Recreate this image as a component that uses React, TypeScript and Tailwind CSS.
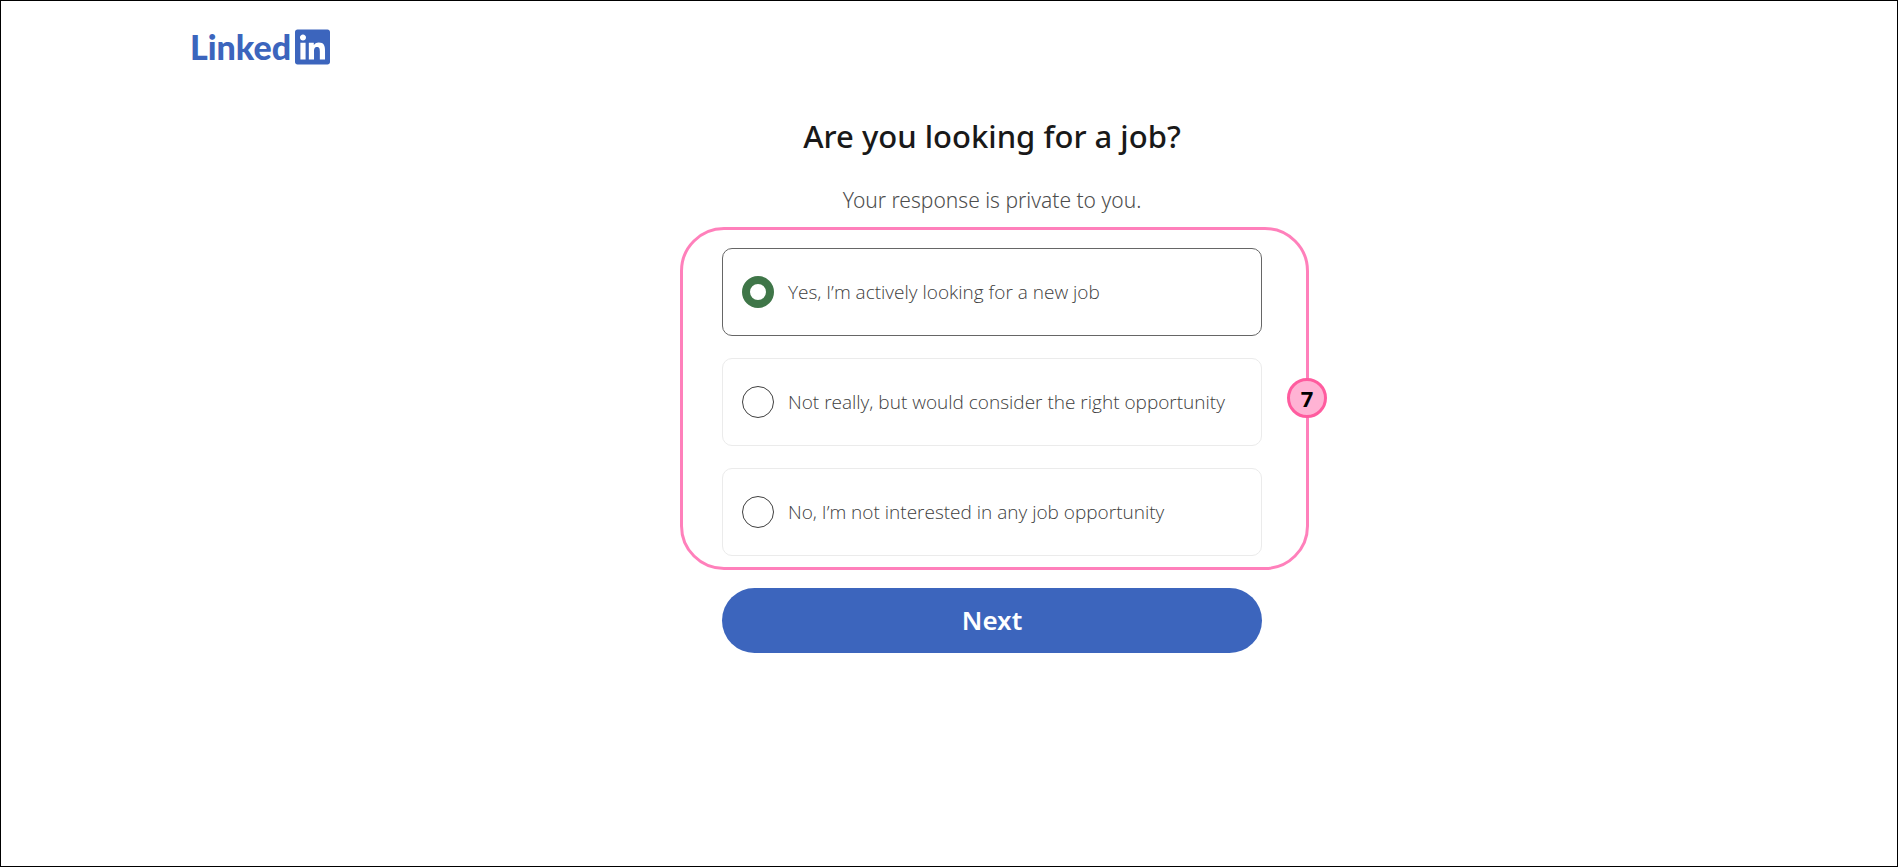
import { useState } from 'react'
import { FaLinkedin } from 'react-icons/fa'

const options = [
  { id: 'active', label: 'Yes, I’m actively looking for a new job' },
  { id: 'open', label: 'Not really, but would consider the right opportunity' },
  { id: 'none', label: 'No, I’m not interested in any job opportunity' },
]

function Logo() {
  return (
    <a href="#" aria-label="LinkedIn" className="inline-flex items-center gap-1 text-[#3c65bd]">
      <span className="font-['Lato',sans-serif] text-[34px] leading-10 font-black">Linked</span>
      <FaLinkedin className="h-10 w-[35px]" aria-hidden="true" />
    </a>
  )
}

export default function App() {
  const [selected, setSelected] = useState('active')

  return (
    <div className="min-h-screen border border-black bg-white font-['Noto_Sans','Open_Sans',sans-serif]">
      <header className="pt-[26px] pl-[189px]">
        <Logo />
      </header>

      <main className="flex flex-col items-center pt-[45px] pl-[86px]">
        <h1 id="job-question" className="text-[31px] leading-12 font-medium text-[#191919]">
          Are you looking for a job?
        </h1>
        <p className="mt-6 text-[21px] leading-8 font-light text-[#4d4d4d]">Your response is private to you.</p>

        <form className="flex w-full flex-col items-center" onSubmit={(e) => e.preventDefault()}>
          <fieldset
            aria-labelledby="job-question"
            className="relative mt-[11px] ml-[5px] w-full max-w-[629px] rounded-[44px] border-3 border-[#ff80bb] pt-[18px] pr-11 pb-[11px] pl-[39px]"
          >
            <div className="flex flex-col gap-[22px]">
              {options.map((option) => (
                <label
                  key={option.id}
                  htmlFor={option.id}
                  className="flex h-[88px] items-center gap-3.5 rounded-[10px] border border-[#ebebeb] px-[19px] font-['Open_Sans',sans-serif] text-[19px] font-light text-[#404040] has-checked:border-[#666666]"
                >
                  <input
                    id={option.id}
                    type="radio"
                    name="job-search"
                    checked={selected === option.id}
                    onChange={() => setSelected(option.id)}
                    className="size-8 shrink-0 appearance-none rounded-full border border-[#404040] bg-white checked:border-8 checked:border-[#3f7648]"
                  />
                  {option.label}
                </label>
              ))}
            </div>

            {/* Step marker sitting on the frame's right edge */}
            <span className="absolute top-[148px] -right-[21px] flex size-10 items-center justify-center rounded-full border-3 border-[#ff5c9f] bg-[#ffb3d4] text-[22px] font-bold text-black">
              7
            </span>
          </fieldset>

          <button
            type="submit"
            className="mt-[18px] h-[65px] w-full max-w-[540px] rounded-full bg-[#3c65bd] text-[26px] font-semibold text-white"
          >
            Next
          </button>
        </form>
      </main>
    </div>
  )
}
